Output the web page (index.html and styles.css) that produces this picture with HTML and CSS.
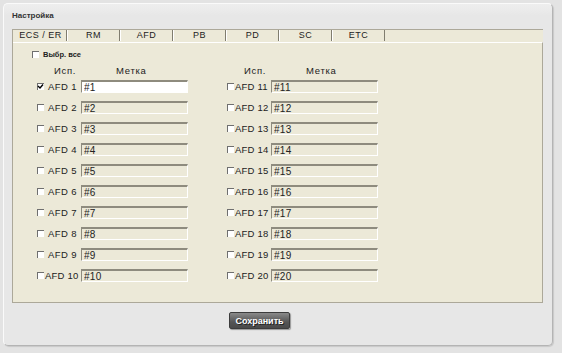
FILE: index.html
```html
<!DOCTYPE html>
<html lang="ru">
<head>
    <meta charset="UTF-8">
    <title>Настройка</title>
    <link rel="stylesheet" href="styles.css">
</head>
<body>
    <div class="panel">
        <div class="panel-title">Настройка</div>

        <div class="box">
            <!-- Вкладки -->
            <div class="tabs">
                <div class="tab">ECS / ER</div>
                <div class="tab">RM</div>
                <div class="tab active">AFD</div>
                <div class="tab">PB</div>
                <div class="tab">PD</div>
                <div class="tab">SC</div>
                <div class="tab">ETC</div>
            </div>

            <div class="content">
                <label class="select-all"><span class="chk"></span>Выбр. все</label>

                <div class="columns">
                    <!-- AFD 1 - 10 -->
                    <div class="col">
                        <div class="hdr"><span class="hdr-use">Исп.</span><span>Метка</span></div>
                        <div class="row"><span class="chk checked"><svg width="7" height="7" viewBox="0 0 7 7"><path d="M1 3 L3 5 L6 1.5" stroke="#000" stroke-width="1.4" fill="none"/></svg></span><span class="lbl">AFD 1</span><input class="fld on" value="#1"></div>
                        <div class="row"><span class="chk"></span><span class="lbl">AFD 2</span><input class="fld" value="#2" disabled></div>
                        <div class="row"><span class="chk"></span><span class="lbl">AFD 3</span><input class="fld" value="#3" disabled></div>
                        <div class="row"><span class="chk"></span><span class="lbl">AFD 4</span><input class="fld" value="#4" disabled></div>
                        <div class="row"><span class="chk"></span><span class="lbl">AFD 5</span><input class="fld" value="#5" disabled></div>
                        <div class="row"><span class="chk"></span><span class="lbl">AFD 6</span><input class="fld" value="#6" disabled></div>
                        <div class="row"><span class="chk"></span><span class="lbl">AFD 7</span><input class="fld" value="#7" disabled></div>
                        <div class="row"><span class="chk"></span><span class="lbl">AFD 8</span><input class="fld" value="#8" disabled></div>
                        <div class="row"><span class="chk"></span><span class="lbl">AFD 9</span><input class="fld" value="#9" disabled></div>
                        <div class="row"><span class="chk"></span><span class="lbl wide">AFD 10</span><input class="fld" value="#10" disabled></div>
                    </div>

                    <!-- AFD 11 - 20 -->
                    <div class="col">
                        <div class="hdr"><span class="hdr-use">Исп.</span><span>Метка</span></div>
                        <div class="row"><span class="chk"></span><span class="lbl wide">AFD 11</span><input class="fld" value="#11" disabled></div>
                        <div class="row"><span class="chk"></span><span class="lbl wide">AFD 12</span><input class="fld" value="#12" disabled></div>
                        <div class="row"><span class="chk"></span><span class="lbl wide">AFD 13</span><input class="fld" value="#13" disabled></div>
                        <div class="row"><span class="chk"></span><span class="lbl wide">AFD 14</span><input class="fld" value="#14" disabled></div>
                        <div class="row"><span class="chk"></span><span class="lbl wide">AFD 15</span><input class="fld" value="#15" disabled></div>
                        <div class="row"><span class="chk"></span><span class="lbl wide">AFD 16</span><input class="fld" value="#16" disabled></div>
                        <div class="row"><span class="chk"></span><span class="lbl wide">AFD 17</span><input class="fld" value="#17" disabled></div>
                        <div class="row"><span class="chk"></span><span class="lbl wide">AFD 18</span><input class="fld" value="#18" disabled></div>
                        <div class="row"><span class="chk"></span><span class="lbl wide">AFD 19</span><input class="fld" value="#19" disabled></div>
                        <div class="row"><span class="chk"></span><span class="lbl wide">AFD 20</span><input class="fld" value="#20" disabled></div>
                    </div>
                </div>
            </div>
        </div>

        <button class="save" type="button">Сохранить</button>
    </div>
</body>
</html>
```

FILE: styles.css
```css
body {
    margin: 0;
    padding: 3px;
    background-color: #e3e3e3;
    font-family: "Liberation Sans", Arial, sans-serif;
    color: #222;
}

.panel {
    box-sizing: border-box;
    width: 550px;
    height: 343px;
    padding-left: 8px;
    border: 1px solid;
    border-color: #fafafa #b4b4b4 #b4b4b4 #fafafa;
    border-radius: 5px;
    background: linear-gradient(#eeeeee, #e7e7e7 12px);
    box-shadow: 1px 1px 1px rgba(0, 0, 0, 0.12);
}

.panel-title {
    margin-top: 7px;
    height: 10px;
    line-height: 10px;
    font-size: 8px;
    font-weight: bold;
    color: #333;
}

.box {
    width: 531px;
    height: 274px;
    margin-top: 8px;
    display: flex;
    flex-direction: column;
    background-color: #ece9d8;
    border-left: 1px solid #aca899;
    box-sizing: border-box;
}

/* вкладки */
.tabs {
    display: flex;
    height: 12px;
    padding-left: 1px;
    border-top: 1px solid #aca899;
}

.tab {
    box-sizing: border-box;
    width: 53px;
    height: 11px;
    line-height: 11px;
    text-align: center;
    font-size: 9px;
    letter-spacing: 0.5px;
    color: #222;
    border-left: 1px solid #fff;
    border-right: 1px solid #807d6f;
}

.tab:first-child {
    border-left-color: #ece9d8;
}

.content {
    flex: 1;
    border-top: 1px solid #fff;
    border-right: 1px solid #aca899;
    border-bottom: 1px solid #aca899;
}

.chk {
    box-sizing: border-box;
    width: 7px;
    height: 7px;
    flex: none;
    display: flex;
    background-color: #fff;
    border-top: 1px solid #6f6f6f;
    border-left: 1px solid #6f6f6f;
}

.chk svg {
    margin: -1px 0 0 -1px;
}

.select-all {
    display: flex;
    align-items: center;
    gap: 4px;
    margin: 8px 0 0 19px;
    height: 7px;
    font-size: 7.5px;
    font-weight: bold;
    color: #222;
}

.columns {
    display: grid;
    grid-template-columns: 190px 190px;
    padding-left: 24px;
}

.col {
    display: flex;
    flex-direction: column;
    gap: 8px;
}

.hdr {
    display: flex;
    height: 12px;
    line-height: 12px;
    margin: 7px 0 -5px;
    font-size: 9.5px;
    letter-spacing: 0.7px;
}

.hdr-use {
    width: 79px;
    padding-left: 17px;
    box-sizing: border-box;
}

.row {
    display: flex;
    align-items: center;
    height: 13px;
}

.lbl {
    width: 37px;
    padding-left: 4px;
    box-sizing: border-box;
    font-size: 9.5px;
    letter-spacing: 0.4px;
    white-space: nowrap;
}

.lbl.wide {
    padding-left: 1px;
    letter-spacing: 0.2px;
}

.fld {
    box-sizing: border-box;
    width: 107px;
    height: 13px;
    padding: 0 0 0 2px;
    margin: 0;
    font-family: "Liberation Sans", Arial, sans-serif;
    font-size: 10px;
    letter-spacing: 0.3px;
    color: #222;
    background-color: #ece9d8;
    border: 1px solid;
    border-color: #8e8b7e #fff #fff #8e8b7e;
    border-top-width: 2px;
    outline: none;
}

.fld:disabled {
    color: #222;
}

.fld.on {
    background-color: #fff;
}

.save {
    margin: 9px 0 0 217px;
    width: 61px;
    height: 17px;
    padding: 0;
    font-family: "Liberation Sans", Arial, sans-serif;
    font-size: 9px;
    font-weight: bold;
    color: #fff;
    text-shadow: 1px 1px 0 #222;
    background: linear-gradient(#8a8a8a, #555 60%, #4a4a4a);
    border: 1px solid #3c3c3c;
    border-radius: 2px;
    box-shadow: 1px 1px 1px rgba(0, 0, 0, 0.35);
    cursor: pointer;
}
```
